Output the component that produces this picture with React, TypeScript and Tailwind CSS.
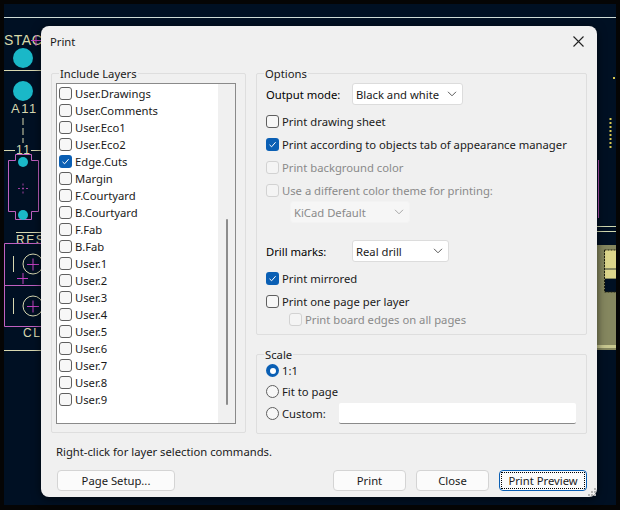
import type { ReactNode } from 'react'

const layers = [
  'User.Drawings', 'User.Comments', 'User.Eco1', 'User.Eco2', 'Edge.Cuts', 'Margin', 'F.Courtyard', 'B.Courtyard',
  'F.Fab', 'B.Fab', 'User.1', 'User.2', 'User.3', 'User.4', 'User.5', 'User.6', 'User.7', 'User.8', 'User.9',
]

function Checkbox({ checked, disabled, label, className = '' }: { checked?: boolean; disabled?: boolean; label: string; className?: string }) {
  return (
    <div className={`flex items-center gap-[3px] ${disabled ? 'text-[#8a8a8a]' : 'text-[#1a1a1a]'} ${className}`}>
      {checked ? (
        <span className="flex h-[13px] w-[13px] items-center justify-center rounded-[3px] bg-[#0a5fb4]">
          <svg width="9" height="9" viewBox="0 0 9 9" fill="none" stroke="#fff" strokeWidth="1"><path d="M1.5 4.8 3.6 6.8 7.6 2.2" /></svg>
        </span>
      ) : (
        <span className={`h-[13px] w-[13px] rounded-[3px] border ${disabled ? 'border-[#d2d2d2] bg-[#f4f4f4]' : 'border-[#5f5f5f] bg-[#f7f7f7]'}`} />
      )}
      <span>{label}</span>
    </div>
  )
}

function Radio({ checked, label }: { checked?: boolean; label: string }) {
  return (
    <div className="flex items-center gap-[3px] text-[#1a1a1a]">
      {checked ? (
        <span className="flex h-[13px] w-[13px] items-center justify-center rounded-full bg-[#0a5fb4]">
          <span className="h-[6px] w-[6px] rounded-full bg-white" />
        </span>
      ) : (
        <span className="h-[13px] w-[13px] rounded-full border border-[#5f5f5f] bg-[#f7f7f7]" />
      )}
      <span>{label}</span>
    </div>
  )
}

function Dropdown({ value, width, disabled }: { value: string; width: string; disabled?: boolean }) {
  return (
    <div className={`flex h-[22px] items-center justify-between rounded-[3px] border pl-[3px] pr-[5px] ${width} ${disabled ? 'border-[#f3f3f3] bg-[#f6f6f6] text-[#8a8a8a]' : 'border-[#dcdcdc] bg-white text-[#1a1a1a]'}`}>
      <span>{value}</span>
      <svg width="10" height="6" viewBox="0 0 10 6" fill="none" stroke={disabled ? '#a8a8a8' : '#5a5a5a'} strokeWidth="1"><path d="M1 .8 5 4.8 9 .8" /></svg>
    </div>
  )
}

function Group({ title, className, children }: { title: string; className: string; children: ReactNode }) {
  return (
    <div className={`relative rounded-[2px] border border-[#dedede] ${className}`}>
      <span className="absolute left-[7px] top-[-8px] bg-[#f0f0f0] px-[1px] leading-[15px] text-[#1a1a1a]">{title}</span>
      {children}
    </div>
  )
}

function Button({ label, className }: { label: string; className: string }) {
  return (
    <div className={`flex h-[21px] items-center justify-center rounded-[4px] border border-[#d4d4d4] bg-[#fbfbfb] pb-[1px] text-[#1a1a1a] ${className}`}>{label}</div>
  )
}

function Board() {
  return (
    <svg className="absolute inset-0" width="620" height="510" viewBox="0 0 620 510" fontFamily="'Liberation Sans', sans-serif">
      <rect width="620" height="510" fill="#050505" />
      <rect x="4" y="4" width="612" height="501" fill="#001023" />
      <path d="M4 17.5H616" stroke="#cfdcd6" />
      <text x="4" y="45" fontSize="14" letterSpacing="0.5" fill="#d8d8a8">STAC</text>
      <path d="M31 40.500H41M36 35V46" stroke="#c040c0" />
      <path d="M4 70.5H41M4 150.5H15M31 150.5H41M16 232.500H41M4 350.5H41" stroke="#d8d8b0" />
      <circle cx="23" cy="58" r="10" fill="#1ab8c8" />
      <circle cx="23" cy="91" r="10" fill="#1ab8c8" />
      <text x="11" y="113" fontSize="13" letterSpacing="1.500" fill="#d8d8b0">A11</text>
      <path d="M23 118V143" stroke="#d8d8b0" strokeDasharray="7 3" />
      <text x="16" y="154" fontSize="12" letterSpacing="1.500" fill="#d8d8b0">11</text>
      <path d="M8.5 160.500H15.5V154.500H31.5V160.500H38.5V211.500H31.5V219.500H15.5V211.500H8.5Z" fill="none" stroke="#c060c0" />
      <circle cx="23" cy="162" r="5" fill="#1ab8c8" />
      <circle cx="23" cy="215" r="5" fill="#1ab8c8" />
      <path d="M18 188.500H28M23 183.500V193.500" stroke="#a040a0" strokeDasharray="2 2" />
      <text x="16" y="244" fontSize="12" letterSpacing="1.500" fill="#d8d8b0">RESE</text>
      <path d="M4.500 243.500H41M4.500 285.500H41M4.500 326.500H41M4.500 243.500V326.500" stroke="#c060c0" />
      <circle cx="33" cy="264" r="10" fill="none" stroke="#d8d8b0" />
      <circle cx="33" cy="306" r="10" fill="none" stroke="#d8d8b0" />
      <path d="M27 264.500H39M33 258.500V270.500M27 306.500H39M33 300.500V312.500M17 278.500H28M23 273V284" stroke="#c040c0" />
      <path d="M13.500 256V272M13.500 298V314" stroke="#d8d8b0" />
      <text x="23" y="337" fontSize="12" letterSpacing="1.500" fill="#d8d8b0">CLR</text>
      <path d="M610.500 118V150" stroke="#d8c850" strokeWidth="2" strokeDasharray="2 2" />
      <rect x="613" y="77" width="2" height="2" fill="#d8c850" />
      <path d="M598.500 160V218" stroke="#b050b0" />
      <path d="M597 226.500H616M597 231.500H616" stroke="#d0d8b0" />
      <rect x="597" y="245" width="19" height="105" fill="#85875f" />
      <rect x="605" y="250" width="11" height="18" fill="#dcd68c" />
      <rect x="605" y="270" width="11" height="8" fill="#dcd68c" />
      <rect x="605" y="279" width="11" height="13" fill="#001023" />
      <path d="M604.500 250V292H616M604.500 250H616" fill="none" stroke="#20200f" strokeDasharray="2 1" />
      <rect x="597" y="345" width="19" height="3" fill="#c8c890" />
    </svg>
  )
}

export default function App() {
  return (
    <div className="relative h-[510px] w-[620px] overflow-hidden text-[11.25px] leading-[15px] font-['Noto_Sans','Open_Sans',sans-serif]">
      <Board />
      <div className="absolute left-[41px] top-[26px] flex h-[471px] w-[556px] flex-col rounded-[8px] bg-[#f0f0f0] shadow-[0_2px_10px_rgba(0,0,0,0.6)]">
        <div className="flex h-[30px] items-center justify-between pl-[9px] pr-[13px] text-[#1a1a1a]">
          <span>Print</span>
          <svg width="11" height="11" viewBox="0 0 11 11" fill="none" stroke="#222" strokeWidth="1.1"><path d="M.5.500 10.500 10.500M10.500.500.500 10.500" /></svg>
        </div>
        <div className="mt-[17px] flex gap-[10px] pl-[10px] pr-[10px]">
          <Group title="Include Layers" className="h-[360px] w-[195px] pl-[4px] pt-[9px]">
            <div className="flex h-[341px] w-[180px] border border-[#8a8a8a] bg-white">
              <div className="flex-1 pl-[2px] pt-[1px]">
                {layers.map((l) => (
                  <Checkbox key={l} label={l} checked={l === 'Edge.Cuts'} className="h-[17px]" />
                ))}
              </div>
              <div className="flex w-[17px] justify-center bg-[#f0f0f0] pt-[135px]">
                <div className="h-[186px] w-[2px] rounded-full bg-[#8c8c8c]" />
              </div>
            </div>
          </Group>
          <div className="flex w-[331px] flex-col gap-[19px]">
            <Group title="Options" className="h-[262px] pl-[9px] pt-[9px]">
              <div className="flex items-center">
                <span className="w-[86px]">Output mode:</span>
                <Dropdown value="Black and white" width="w-[111px]" />
              </div>
              <Checkbox label="Print drawing sheet" className="mt-[9px]" />
              <Checkbox label="Print according to objects tab of appearance manager" checked className="mt-[8px]" />
              <Checkbox label="Print background color" disabled className="mt-[8px]" />
              <Checkbox label="Use a different color theme for printing:" disabled className="mt-[8px]" />
              <div className="ml-[24px] mt-[3px]"><Dropdown value="KiCad Default" width="w-[120px]" disabled /></div>
              <div className="mt-[17px] flex items-center">
                <span className="w-[86px]">Drill marks:</span>
                <Dropdown value="Real drill" width="w-[97px]" />
              </div>
              <Checkbox label="Print mirrored" checked className="mt-[9px]" />
              <Checkbox label="Print one page per layer" className="mt-[8px]" />
              <Checkbox label="Print board edges on all pages" disabled className="ml-[23px] mt-[3px]" />
            </Group>
            <Group title="Scale" className="h-[80px] pl-[9px] pt-[8px]">
              <Radio label="1:1" checked />
              <div className="mt-[6px]"><Radio label="Fit to page" /></div>
              <div className="mt-[4px] flex h-[21px] items-center">
                <div className="w-[73px]"><Radio label="Custom:" /></div>
                <div className="h-[21px] w-[237px] rounded-[2px] border-b border-[#8a8a8a] bg-white" />
              </div>
            </Group>
          </div>
        </div>
        <div className="ml-[15px] mt-[10px] text-[#1a1a1a]">Right-click for layer selection commands.</div>
        <div className="mt-[11px] flex pl-[16px] pr-[10px]">
          <Button label="Page Setup..." className="w-[118px]" />
          <div className="ml-auto flex gap-[10px]">
            <Button label="Print" className="w-[73px]" />
            <Button label="Close" className="w-[73px]" />
            <div className="flex h-[21px] w-[88px] items-center justify-center rounded-[4px] border border-[#0a5fb4] bg-[#fbfbfb] p-[1px] text-[#1a1a1a]">
              <div className="flex h-full w-full items-center justify-center border border-dotted border-black pb-[1px]">Print Preview</div>
            </div>
          </div>
        </div>
        <svg className="absolute bottom-[1px] right-[1px]" width="8" height="8" viewBox="0 0 8 8" fill="#b4b4b4">
          <rect x="6" y="0" width="2" height="2" /><rect x="3" y="3" width="2" height="2" /><rect x="6" y="3" width="2" height="2" />
          <rect x="0" y="6" width="2" height="2" /><rect x="3" y="6" width="2" height="2" /><rect x="6" y="6" width="2" height="2" />
        </svg>
      </div>
    </div>
  )
}
